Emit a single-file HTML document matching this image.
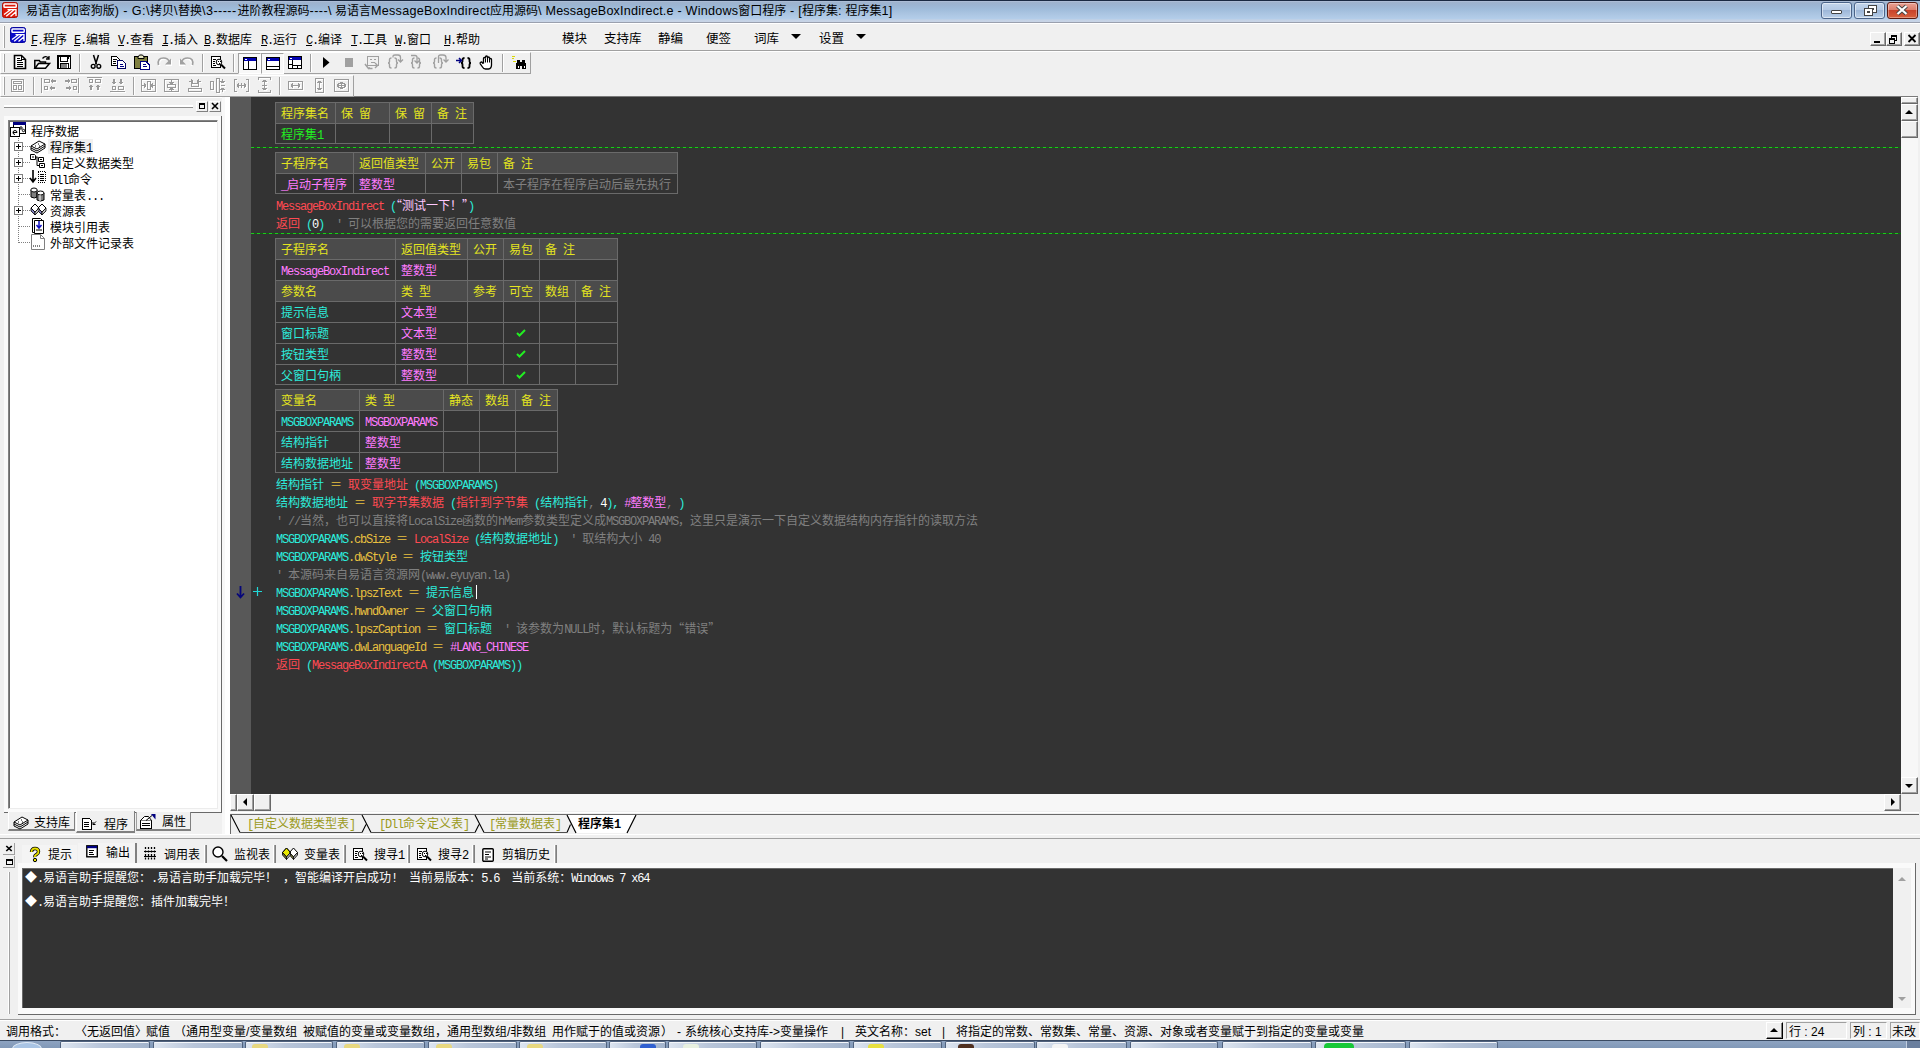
<!DOCTYPE html><html lang="zh-CN"><head><meta charset="utf-8"><title>易语言</title><style>
*{box-sizing:border-box;margin:0;padding:0}
html,body{width:1920px;height:1048px;overflow:hidden;background:#f0f0f0}
body{position:relative;font-family:"Liberation Sans","Noto Sans CJK SC",sans-serif;font-size:12px;color:#000}
.a{position:absolute}
.s{font-family:"Liberation Mono","Noto Sans CJK SC",monospace;font-size:12px;line-height:14px;white-space:pre}
.s i{font-style:normal;letter-spacing:-1.2px}
.s b{font-weight:normal;line-height:0;font-family:"Noto Sans CJK SC",sans-serif}
svg{position:absolute;overflow:visible}
.tb{font-size:12px;line-height:16px;white-space:pre}
.tb i{font-style:normal;font-size:12.6px}
</style></head><body>
<div class="a " style="left:0px;top:0px;width:1920px;height:23px;background:linear-gradient(#1a2a42 0,#1a2a42 1px,#acbdd6 1px,#acbdd6 2px,#9fb3cd 2px,#9cb5d2 5px,#9fbcda 9px,#abc5e2 14px,#b3cde9 18.500px,#c4d2e5 20px,#c8d4e6 22px,#9aa0ae 22px,#9aa0ae 23px)"></div>
<div class="a tb" style="left:26px;top:3px">易语言<i style="letter-spacing:0.45px">(</i>加密狗版<i style="letter-spacing:0.45px">) - G:\</i>拷贝<i style="letter-spacing:0.45px">\</i>替换<i style="letter-spacing:0.45px">\3-----</i></div>
<div class="a tb" style="left:237.5px;top:3px">进阶教程源码<i style="letter-spacing:0.45px">----\</i></div>
<div class="a tb" style="left:335px;top:3px">易语言<i style="letter-spacing:0.27px">MessageBoxIndirect</i></div>
<div class="a tb" style="left:490px;top:3px">应用源码<i style="letter-spacing:0.45px">\</i></div>
<div class="a tb" style="left:545.5px;top:3px"><i style="letter-spacing:0.18px">MessageBoxIndirect.e - </i></div>
<div class="a tb" style="left:685.5px;top:3px"><i style="letter-spacing:0.25px">Windows</i>窗口程序<i style="letter-spacing:0.25px"> - [</i>程序集<i style="letter-spacing:0.25px">: </i>程序集<i style="letter-spacing:0.25px">1]</i></div>
<div class="a " style="left:0px;top:23px;width:1920px;height:27px;background:#f0f0f0;border-top:1px solid #fff"></div>
<div class="a " style="left:0px;top:50px;width:1920px;height:2px;background:#a0a0a0;border-bottom:1px solid #fff"></div>
<div class="a s" style="left:31px;top:34px"><i style="text-decoration:underline">F</i><i>.</i>程序</div>
<div class="a s" style="left:74px;top:34px"><i style="text-decoration:underline">E</i><i>.</i>编辑</div>
<div class="a s" style="left:118px;top:34px"><i style="text-decoration:underline">V</i><i>.</i>查看</div>
<div class="a s" style="left:162px;top:34px"><i style="text-decoration:underline">I</i><i>.</i>插入</div>
<div class="a s" style="left:204px;top:34px"><i style="text-decoration:underline">B</i><i>.</i>数据库</div>
<div class="a s" style="left:261px;top:34px"><i style="text-decoration:underline">R</i><i>.</i>运行</div>
<div class="a s" style="left:306px;top:34px"><i style="text-decoration:underline">C</i><i>.</i>编译</div>
<div class="a s" style="left:351px;top:34px"><i style="text-decoration:underline">T</i><i>.</i>工具</div>
<div class="a s" style="left:395px;top:34px"><i style="text-decoration:underline">W</i><i>.</i>窗口</div>
<div class="a s" style="left:444px;top:34px"><i style="text-decoration:underline">H</i><i>.</i>帮助</div>
<div class="a tt" style="left:562px;top:32px;color:#000;font-size:12.5px;line-height:14px">模块</div>
<div class="a tt" style="left:604px;top:32px;color:#000;font-size:12.5px;line-height:14px">支持库</div>
<div class="a tt" style="left:658px;top:32px;color:#000;font-size:12.5px;line-height:14px">静编</div>
<div class="a tt" style="left:706px;top:32px;color:#000;font-size:12.5px;line-height:14px">便签</div>
<div class="a tt" style="left:754px;top:32px;color:#000;font-size:12.5px;line-height:14px">词库</div>
<div class="a tt" style="left:819px;top:32px;color:#000;font-size:12.5px;line-height:14px">设置</div>
<div class="a" style="left:791px;top:34px;border:5px solid transparent;border-top:5px solid #000;border-bottom:0"></div>
<div class="a" style="left:856px;top:34px;border:5px solid transparent;border-top:5px solid #000;border-bottom:0"></div>
<div class="a " style="left:230px;top:96px;width:1690px;height:716px;background:#333;border-top:1px solid #7a7a7a"></div>
<div class="a " style="left:230px;top:97px;width:21px;height:697px;background:#585858"></div>
<div class="a " style="left:275px;top:102px;width:199px;height:42px;background:#333;border:1px solid #6a6a6a"></div>
<div class="a " style="left:276px;top:103px;width:197px;height:20px;background:#4b4b4b"></div>
<div class="a s" style="left:281px;top:108px;color:#e4e420;">程序集名</div>
<div class="a " style="left:335px;top:102px;width:1px;height:21px;background:#6a6a6a"></div>
<div class="a s" style="left:341px;top:108px;color:#e4e420;">保<i> </i>留</div>
<div class="a " style="left:389px;top:102px;width:1px;height:21px;background:#6a6a6a"></div>
<div class="a s" style="left:395px;top:108px;color:#e4e420;">保<i> </i>留</div>
<div class="a " style="left:431px;top:102px;width:1px;height:21px;background:#6a6a6a"></div>
<div class="a s" style="left:437px;top:108px;color:#e4e420;">备<i> </i>注</div>
<div class="a " style="left:275px;top:123px;width:199px;height:1px;background:#6a6a6a"></div>
<div class="a s" style="left:281px;top:129px;color:#22ee22;">程序集<i>1</i></div>
<div class="a " style="left:335px;top:123px;width:1px;height:20px;background:#6a6a6a"></div>
<div class="a " style="left:389px;top:123px;width:1px;height:20px;background:#6a6a6a"></div>
<div class="a " style="left:431px;top:123px;width:1px;height:20px;background:#6a6a6a"></div>
<div class="a " style="left:275px;top:152px;width:403px;height:42px;background:#333;border:1px solid #6a6a6a"></div>
<div class="a " style="left:276px;top:153px;width:401px;height:20px;background:#4b4b4b"></div>
<div class="a s" style="left:281px;top:158px;color:#e4e420;">子程序名</div>
<div class="a " style="left:353px;top:152px;width:1px;height:21px;background:#6a6a6a"></div>
<div class="a s" style="left:359px;top:158px;color:#e4e420;">返回值类型</div>
<div class="a " style="left:425px;top:152px;width:1px;height:21px;background:#6a6a6a"></div>
<div class="a s" style="left:431px;top:158px;color:#e4e420;">公开</div>
<div class="a " style="left:461px;top:152px;width:1px;height:21px;background:#6a6a6a"></div>
<div class="a s" style="left:467px;top:158px;color:#e4e420;">易包</div>
<div class="a " style="left:497px;top:152px;width:1px;height:21px;background:#6a6a6a"></div>
<div class="a s" style="left:503px;top:158px;color:#e4e420;">备<i> </i>注</div>
<div class="a " style="left:275px;top:173px;width:403px;height:1px;background:#6a6a6a"></div>
<div class="a s" style="left:281px;top:179px;color:#ff7cff;"><i>_</i>启动子程序</div>
<div class="a " style="left:353px;top:173px;width:1px;height:20px;background:#6a6a6a"></div>
<div class="a s" style="left:359px;top:179px;color:#ff7cff;">整数型</div>
<div class="a " style="left:425px;top:173px;width:1px;height:20px;background:#6a6a6a"></div>
<div class="a " style="left:461px;top:173px;width:1px;height:20px;background:#6a6a6a"></div>
<div class="a " style="left:497px;top:173px;width:1px;height:20px;background:#6a6a6a"></div>
<div class="a s" style="left:503px;top:179px;color:#808080;">本子程序在程序启动后最先执行</div>
<div class="a " style="left:275px;top:238px;width:343px;height:147px;background:#333;border:1px solid #6a6a6a"></div>
<div class="a " style="left:276px;top:239px;width:341px;height:20px;background:#4b4b4b"></div>
<div class="a s" style="left:281px;top:244px;color:#e4e420;">子程序名</div>
<div class="a " style="left:395px;top:238px;width:1px;height:21px;background:#6a6a6a"></div>
<div class="a s" style="left:401px;top:244px;color:#e4e420;">返回值类型</div>
<div class="a " style="left:467px;top:238px;width:1px;height:21px;background:#6a6a6a"></div>
<div class="a s" style="left:473px;top:244px;color:#e4e420;">公开</div>
<div class="a " style="left:503px;top:238px;width:1px;height:21px;background:#6a6a6a"></div>
<div class="a s" style="left:509px;top:244px;color:#e4e420;">易包</div>
<div class="a " style="left:539px;top:238px;width:1px;height:21px;background:#6a6a6a"></div>
<div class="a s" style="left:545px;top:244px;color:#e4e420;">备<i> </i>注</div>
<div class="a " style="left:275px;top:259px;width:343px;height:1px;background:#6a6a6a"></div>
<div class="a s" style="left:281px;top:265px;color:#ff7cff;"><i>MessageBoxIndirect</i></div>
<div class="a " style="left:395px;top:259px;width:1px;height:21px;background:#6a6a6a"></div>
<div class="a s" style="left:401px;top:265px;color:#ff7cff;">整数型</div>
<div class="a " style="left:467px;top:259px;width:1px;height:21px;background:#6a6a6a"></div>
<div class="a " style="left:503px;top:259px;width:1px;height:21px;background:#6a6a6a"></div>
<div class="a " style="left:539px;top:259px;width:1px;height:21px;background:#6a6a6a"></div>
<div class="a " style="left:276px;top:281px;width:341px;height:20px;background:#4b4b4b"></div>
<div class="a " style="left:275px;top:280px;width:343px;height:1px;background:#6a6a6a"></div>
<div class="a s" style="left:281px;top:286px;color:#e4e420;">参数名</div>
<div class="a " style="left:395px;top:280px;width:1px;height:21px;background:#6a6a6a"></div>
<div class="a s" style="left:401px;top:286px;color:#e4e420;">类<i> </i>型</div>
<div class="a " style="left:467px;top:280px;width:1px;height:21px;background:#6a6a6a"></div>
<div class="a s" style="left:473px;top:286px;color:#e4e420;">参考</div>
<div class="a " style="left:503px;top:280px;width:1px;height:21px;background:#6a6a6a"></div>
<div class="a s" style="left:509px;top:286px;color:#e4e420;">可空</div>
<div class="a " style="left:539px;top:280px;width:1px;height:21px;background:#6a6a6a"></div>
<div class="a s" style="left:545px;top:286px;color:#e4e420;">数组</div>
<div class="a " style="left:575px;top:280px;width:1px;height:21px;background:#6a6a6a"></div>
<div class="a s" style="left:581px;top:286px;color:#e4e420;">备<i> </i>注</div>
<div class="a " style="left:275px;top:301px;width:343px;height:1px;background:#6a6a6a"></div>
<div class="a s" style="left:281px;top:307px;color:#2cecdc;">提示信息</div>
<div class="a " style="left:395px;top:301px;width:1px;height:21px;background:#6a6a6a"></div>
<div class="a s" style="left:401px;top:307px;color:#ff7cff;">文本型</div>
<div class="a " style="left:467px;top:301px;width:1px;height:21px;background:#6a6a6a"></div>
<div class="a " style="left:503px;top:301px;width:1px;height:21px;background:#6a6a6a"></div>
<div class="a " style="left:539px;top:301px;width:1px;height:21px;background:#6a6a6a"></div>
<div class="a " style="left:575px;top:301px;width:1px;height:21px;background:#6a6a6a"></div>
<div class="a " style="left:275px;top:322px;width:343px;height:1px;background:#6a6a6a"></div>
<div class="a s" style="left:281px;top:328px;color:#2cecdc;">窗口标题</div>
<div class="a " style="left:395px;top:322px;width:1px;height:21px;background:#6a6a6a"></div>
<div class="a s" style="left:401px;top:328px;color:#ff7cff;">文本型</div>
<div class="a " style="left:467px;top:322px;width:1px;height:21px;background:#6a6a6a"></div>
<div class="a " style="left:503px;top:322px;width:1px;height:21px;background:#6a6a6a"></div>
<svg style="left:516px;top:329px" width="10" height="8" viewBox="0 0 10 8"><path d="M1 4 L3.5 6.5 L9 1" fill="none" stroke="#2e2" stroke-width="2"/></svg>
<div class="a " style="left:539px;top:322px;width:1px;height:21px;background:#6a6a6a"></div>
<div class="a " style="left:575px;top:322px;width:1px;height:21px;background:#6a6a6a"></div>
<div class="a " style="left:275px;top:343px;width:343px;height:1px;background:#6a6a6a"></div>
<div class="a s" style="left:281px;top:349px;color:#2cecdc;">按钮类型</div>
<div class="a " style="left:395px;top:343px;width:1px;height:21px;background:#6a6a6a"></div>
<div class="a s" style="left:401px;top:349px;color:#ff7cff;">整数型</div>
<div class="a " style="left:467px;top:343px;width:1px;height:21px;background:#6a6a6a"></div>
<div class="a " style="left:503px;top:343px;width:1px;height:21px;background:#6a6a6a"></div>
<svg style="left:516px;top:350px" width="10" height="8" viewBox="0 0 10 8"><path d="M1 4 L3.5 6.5 L9 1" fill="none" stroke="#2e2" stroke-width="2"/></svg>
<div class="a " style="left:539px;top:343px;width:1px;height:21px;background:#6a6a6a"></div>
<div class="a " style="left:575px;top:343px;width:1px;height:21px;background:#6a6a6a"></div>
<div class="a " style="left:275px;top:364px;width:343px;height:1px;background:#6a6a6a"></div>
<div class="a s" style="left:281px;top:370px;color:#2cecdc;">父窗口句柄</div>
<div class="a " style="left:395px;top:364px;width:1px;height:20px;background:#6a6a6a"></div>
<div class="a s" style="left:401px;top:370px;color:#ff7cff;">整数型</div>
<div class="a " style="left:467px;top:364px;width:1px;height:20px;background:#6a6a6a"></div>
<div class="a " style="left:503px;top:364px;width:1px;height:20px;background:#6a6a6a"></div>
<svg style="left:516px;top:371px" width="10" height="8" viewBox="0 0 10 8"><path d="M1 4 L3.5 6.5 L9 1" fill="none" stroke="#2e2" stroke-width="2"/></svg>
<div class="a " style="left:539px;top:364px;width:1px;height:20px;background:#6a6a6a"></div>
<div class="a " style="left:575px;top:364px;width:1px;height:20px;background:#6a6a6a"></div>
<div class="a " style="left:275px;top:389px;width:283px;height:84px;background:#333;border:1px solid #6a6a6a"></div>
<div class="a " style="left:276px;top:390px;width:281px;height:20px;background:#4b4b4b"></div>
<div class="a s" style="left:281px;top:395px;color:#e4e420;">变量名</div>
<div class="a " style="left:359px;top:389px;width:1px;height:21px;background:#6a6a6a"></div>
<div class="a s" style="left:365px;top:395px;color:#e4e420;">类<i> </i>型</div>
<div class="a " style="left:443px;top:389px;width:1px;height:21px;background:#6a6a6a"></div>
<div class="a s" style="left:449px;top:395px;color:#e4e420;">静态</div>
<div class="a " style="left:479px;top:389px;width:1px;height:21px;background:#6a6a6a"></div>
<div class="a s" style="left:485px;top:395px;color:#e4e420;">数组</div>
<div class="a " style="left:515px;top:389px;width:1px;height:21px;background:#6a6a6a"></div>
<div class="a s" style="left:521px;top:395px;color:#e4e420;">备<i> </i>注</div>
<div class="a " style="left:275px;top:410px;width:283px;height:1px;background:#6a6a6a"></div>
<div class="a s" style="left:281px;top:416px;color:#2cecdc;"><i>MSGBOXPARAMS</i></div>
<div class="a " style="left:359px;top:410px;width:1px;height:21px;background:#6a6a6a"></div>
<div class="a s" style="left:365px;top:416px;color:#ff7cff;"><i>MSGBOXPARAMS</i></div>
<div class="a " style="left:443px;top:410px;width:1px;height:21px;background:#6a6a6a"></div>
<div class="a " style="left:479px;top:410px;width:1px;height:21px;background:#6a6a6a"></div>
<div class="a " style="left:515px;top:410px;width:1px;height:21px;background:#6a6a6a"></div>
<div class="a " style="left:275px;top:431px;width:283px;height:1px;background:#6a6a6a"></div>
<div class="a s" style="left:281px;top:437px;color:#2cecdc;">结构指针</div>
<div class="a " style="left:359px;top:431px;width:1px;height:21px;background:#6a6a6a"></div>
<div class="a s" style="left:365px;top:437px;color:#ff7cff;">整数型</div>
<div class="a " style="left:443px;top:431px;width:1px;height:21px;background:#6a6a6a"></div>
<div class="a " style="left:479px;top:431px;width:1px;height:21px;background:#6a6a6a"></div>
<div class="a " style="left:515px;top:431px;width:1px;height:21px;background:#6a6a6a"></div>
<div class="a " style="left:275px;top:452px;width:283px;height:1px;background:#6a6a6a"></div>
<div class="a s" style="left:281px;top:458px;color:#2cecdc;">结构数据地址</div>
<div class="a " style="left:359px;top:452px;width:1px;height:20px;background:#6a6a6a"></div>
<div class="a s" style="left:365px;top:458px;color:#ff7cff;">整数型</div>
<div class="a " style="left:443px;top:452px;width:1px;height:20px;background:#6a6a6a"></div>
<div class="a " style="left:479px;top:452px;width:1px;height:20px;background:#6a6a6a"></div>
<div class="a " style="left:515px;top:452px;width:1px;height:20px;background:#6a6a6a"></div>
<div class="a " style="left:251px;top:147px;width:1650px;height:1px;background:repeating-linear-gradient(90deg,#1ec81e 0,#1ec81e 3px,#0a6a0a 3px,#0a6a0a 6px)"></div>
<div class="a " style="left:251px;top:233px;width:1650px;height:1px;background:repeating-linear-gradient(90deg,#1ec81e 0,#1ec81e 3px,#0a6a0a 3px,#0a6a0a 6px)"></div>
<div class="a s" style="left:276px;top:200px"><span style="color:#ff4a52"><i>MessageBoxIndirect</i></span><span style="color:#2cecdc"><i> (</i></span><span style="color:#ffc8ff"><b>“</b>测试一下！<b>”</b></span><span style="color:#2cecdc"><i>)</i></span></div>
<div class="a s" style="left:276px;top:218px"><span style="color:#ff4a52">返回</span><span style="color:#2cecdc"><i> (</i></span><span style="color:#fff"><i>0</i></span><span style="color:#2cecdc"><i>)</i></span><span style="color:#808080"><i>  ' </i>可以根据您的需要返回任意数值</span></div>
<div class="a s" style="left:276px;top:479px"><span style="color:#2cecdc">结构指针</span><span style="color:#e8c040"><i> </i>＝<i> </i></span><span style="color:#ff4a52">取变量地址</span><span style="color:#2cecdc"><i> (</i></span><span style="color:#2cecdc"><i>MSGBOXPARAMS</i></span><span style="color:#2cecdc"><i>)</i></span></div>
<div class="a s" style="left:276px;top:497px"><span style="color:#2cecdc">结构数据地址</span><span style="color:#e8c040"><i> </i>＝<i> </i></span><span style="color:#ff4a52">取字节集数据</span><span style="color:#2cecdc"><i> (</i></span><span style="color:#ff4a52">指针到字节集</span><span style="color:#2cecdc"><i> (</i></span><span style="color:#2cecdc">结构指针</span><span style="color:#808080"><i>, </i></span><span style="color:#fff"><i>4</i></span><span style="color:#2cecdc"><i>), </i></span><span style="color:#ff7cff"><i>#</i>整数型</span><span style="color:#808080"><i>, </i></span><span style="color:#2cecdc"><i>)</i></span></div>
<div class="a s" style="left:276px;top:515px"><span style="color:#808080"><i>' //</i>当然，也可以直接将<i>LocalSize</i>函数的<i>hMem</i>参数类型定义成<i>MSGBOXPARAMS</i>，这里只是演示一下自定义数据结构内存指针的读取方法</span></div>
<div class="a s" style="left:276px;top:533px"><span style="color:#2cecdc"><i>MSGBOXPARAMS</i></span><span style="color:#e8c040"><i>.cbSize</i></span><span style="color:#e8c040"><i> </i>＝<i> </i></span><span style="color:#ff4a52"><i>LocalSize</i></span><span style="color:#2cecdc"><i> (</i></span><span style="color:#2cecdc">结构数据地址</span><span style="color:#2cecdc"><i>)</i></span><span style="color:#808080"><i>  ' </i>取结构大小<i> 40</i></span></div>
<div class="a s" style="left:276px;top:551px"><span style="color:#2cecdc"><i>MSGBOXPARAMS</i></span><span style="color:#e8c040"><i>.dwStyle</i></span><span style="color:#e8c040"><i> </i>＝<i> </i></span><span style="color:#2cecdc">按钮类型</span></div>
<div class="a s" style="left:276px;top:569px"><span style="color:#808080"><i>' </i>本源码来自易语言资源网<i>(www.eyuyan.la)</i></span></div>
<div class="a s" style="left:276px;top:587px"><span style="color:#2cecdc"><i>MSGBOXPARAMS</i></span><span style="color:#e8c040"><i>.lpszText</i></span><span style="color:#e8c040"><i> </i>＝<i> </i></span><span style="color:#2cecdc">提示信息</span></div>
<div class="a s" style="left:276px;top:605px"><span style="color:#2cecdc"><i>MSGBOXPARAMS</i></span><span style="color:#e8c040"><i>.hwndOwner</i></span><span style="color:#e8c040"><i> </i>＝<i> </i></span><span style="color:#2cecdc">父窗口句柄</span></div>
<div class="a s" style="left:276px;top:623px"><span style="color:#2cecdc"><i>MSGBOXPARAMS</i></span><span style="color:#e8c040"><i>.lpszCaption</i></span><span style="color:#e8c040"><i> </i>＝<i> </i></span><span style="color:#2cecdc">窗口标题</span><span style="color:#808080"><i>  ' </i>该参数为<i>NULL</i>时，默认标题为<b>“</b>错误<b>”</b></span></div>
<div class="a s" style="left:276px;top:641px"><span style="color:#2cecdc"><i>MSGBOXPARAMS</i></span><span style="color:#e8c040"><i>.dwLanguageId</i></span><span style="color:#e8c040"><i> </i>＝<i> </i></span><span style="color:#ff7cff"><i>#LANG_CHINESE</i></span></div>
<div class="a s" style="left:276px;top:659px"><span style="color:#ff4a52">返回</span><span style="color:#2cecdc"><i> (</i></span><span style="color:#ff4a52"><i>MessageBoxIndirectA</i></span><span style="color:#2cecdc"><i> (</i></span><span style="color:#2cecdc"><i>MSGBOXPARAMS</i></span><span style="color:#2cecdc"><i>))</i></span></div>
<div class="a " style="left:476px;top:585px;width:1px;height:14px;background:#fff"></div>
<svg style="left:236px;top:586px" width="9" height="13" viewBox="0 0 9 13"><path d="M4.5 0v11M1 7.5l3.5 4 3.5-4" fill="none" stroke="#06067a" stroke-width="1.800"/></svg>
<svg style="left:253px;top:587px" width="9" height="9" viewBox="0 0 9 9"><path d="M4.5 0v9M0 4.5h9" fill="none" stroke="#20d8d8" stroke-width="1.2"/></svg>
<div class="a " style="left:1901px;top:97px;width:17px;height:697px;background:#f7f7f7"></div>
<div class="a " style="left:1901px;top:97px;width:17px;height:7px;background:#f0f0f0;border:1px solid;border-color:#fff #696969 #696969 #fff;box-shadow:inset -1px -1px 0 #a0a0a0"></div>
<div class="a " style="left:1901px;top:104px;width:17px;height:17px;background:#f0f0f0;border:1px solid;border-color:#fff #696969 #696969 #fff;box-shadow:inset -1px -1px 0 #a0a0a0"></div>
<svg style="left:1905px;top:110px" width="8" height="4"><polygon points="0,4 8,4 4,0" fill="#000"/></svg>
<div class="a " style="left:1901px;top:121px;width:17px;height:17px;background:#f0f0f0;border:1px solid;border-color:#fff #696969 #696969 #fff;box-shadow:inset -1px -1px 0 #a0a0a0"></div>
<div class="a " style="left:1901px;top:777px;width:17px;height:17px;background:#f0f0f0;border:1px solid;border-color:#fff #696969 #696969 #fff;box-shadow:inset -1px -1px 0 #a0a0a0"></div>
<svg style="left:1905px;top:784px" width="8" height="4"><polygon points="0,0 8,0 4,4" fill="#000"/></svg>
<div class="a " style="left:230px;top:794px;width:1671px;height:17px;background:#f7f7f7"></div>
<div class="a " style="left:230px;top:794px;width:7px;height:17px;background:#f0f0f0;border:1px solid;border-color:#fff #696969 #696969 #fff;box-shadow:inset -1px -1px 0 #a0a0a0"></div>
<div class="a " style="left:237px;top:794px;width:17px;height:17px;background:#f0f0f0;border:1px solid;border-color:#fff #696969 #696969 #fff;box-shadow:inset -1px -1px 0 #a0a0a0"></div>
<svg style="left:243px;top:798px" width="4" height="8"><polygon points="4,0 4,8 0,4" fill="#000"/></svg>
<div class="a " style="left:254px;top:794px;width:17px;height:17px;background:#f0f0f0;border:1px solid;border-color:#fff #696969 #696969 #fff;box-shadow:inset -1px -1px 0 #a0a0a0"></div>
<div class="a " style="left:1884px;top:794px;width:17px;height:17px;background:#f0f0f0;border:1px solid;border-color:#fff #696969 #696969 #fff;box-shadow:inset -1px -1px 0 #a0a0a0"></div>
<svg style="left:1891px;top:798px" width="4" height="8"><polygon points="0,0 0,8 4,4" fill="#000"/></svg>
<div class="a " style="left:1901px;top:794px;width:19px;height:17px;background:#f0f0f0"></div>
<div class="a " style="left:1918px;top:96px;width:2px;height:716px;background:#f0f0f0"></div>
<div class="a " style="left:229px;top:811px;width:1691px;height:24px;background:#f0f0f0"></div>
<div class="a " style="left:230px;top:814px;width:1689px;height:1px;background:#696969"></div>
<div class="a " style="left:229px;top:812px;width:1690px;height:1px;background:#fff"></div>
<div class="a " style="left:230px;top:814px;width:1px;height:20px;background:#696969"></div>
<svg style="left:229px;top:814px" width="420" height="20" viewBox="0 0 420 20"><path d="M398 19h-51l-9-18h69z" fill="#fff"/><path d="M2 1l9 17.500M133 18.500l4-8M133 1l9 17.500M246 18.500l4-8M246 1l9 17.500M338 18.500l3.500-8" fill="none" stroke="#000" stroke-width="1.100"/><path d="M11 18.500h122M142 18.500h104M255 18.500h83" fill="none" stroke="#505050" stroke-width="1"/><path d="M338 1l9 18M398 19l9-18" fill="none" stroke="#000" stroke-width="1.200"/></svg>
<div class="a s" style="left:247px;top:818px;color:#9a9a1c;"><i>[</i>自定义数据类型表<i>]</i></div>
<div class="a s" style="left:379px;top:818px;color:#9a9a1c;"><i>[Dll</i>命令定义表<i>]</i></div>
<div class="a s" style="left:489px;top:818px;color:#9a9a1c;"><i>[</i>常量数据表<i>]</i></div>
<div class="a s" style="left:578px;top:818px;color:#000;font-weight:bold">程序集<i>1</i></div>
<div class="a " style="left:0px;top:834px;width:1920px;height:1px;background:#fff"></div>
<div class="a " style="left:0px;top:838px;width:1920px;height:1px;background:#a0a0a0"></div>
<div class="a " style="left:0px;top:97px;width:229px;height:737px;background:#f0f0f0;border-top:1px solid #fff"></div>
<div class="a " style="left:222px;top:97px;width:8px;height:737px;background:linear-gradient(90deg,#f8f8f8 0,#f8f8f8 3px,#fff 3px)"></div>
<div class="a " style="left:4px;top:105px;width:189px;height:3px;border-top:2px solid #fff;border-bottom:1px solid #909090"></div>
<div class="a " style="left:196px;top:101px;width:12px;height:11px;background:#f0f0f0;border:1px solid;border-color:#fff #808080 #808080 #fff"></div>
<div class="a " style="left:199px;top:103px;width:6px;height:6px;border:1px solid #000;border-top-width:2px"></div>
<div class="a " style="left:209px;top:101px;width:12px;height:11px;background:#f0f0f0;border:1px solid;border-color:#fff #808080 #808080 #fff"></div>
<svg style="left:212px;top:103px" width="6" height="6"><path d="M0 0l6 6M6 0L0 6" stroke="#000" stroke-width="1.6"/></svg>
<div class="a " style="left:4px;top:116px;width:218px;height:697px;background:#fafafa;border-right:1px solid #696969;border-bottom:1px solid #696969"></div>
<div class="a " style="left:8px;top:120px;width:210px;height:689px;background:#fff;border:1px solid;border-color:#828282 #ececec #ececec #828282;box-shadow:inset 1px 1px 0 #696969"></div>
<div class="a " style="left:18px;top:138px;width:1px;height:105px;background:repeating-linear-gradient(#808080 0,#808080 1px,transparent 1px,transparent 2px)"></div>
<div class="a s" style="left:31px;top:126px;color:#000;">程序数据</div>
<div class="a " style="left:48px;top:139px;width:45px;height:15px;background:#f0f0f0"></div>
<div class="a " style="left:19px;top:146px;width:11px;height:1px;background:repeating-linear-gradient(90deg,#808080 0,#808080 1px,transparent 1px,transparent 2px)"></div>
<div class="a " style="left:14px;top:142px;width:9px;height:9px;background:#fff;border:1px solid #808080"></div>
<div class="a " style="left:16px;top:146px;width:5px;height:1px;background:#000"></div>
<div class="a " style="left:18px;top:144px;width:1px;height:5px;background:#000"></div>
<div class="a s" style="left:50px;top:142px;color:#000;">程序集<i>1</i></div>
<div class="a " style="left:19px;top:162px;width:11px;height:1px;background:repeating-linear-gradient(90deg,#808080 0,#808080 1px,transparent 1px,transparent 2px)"></div>
<div class="a " style="left:14px;top:158px;width:9px;height:9px;background:#fff;border:1px solid #808080"></div>
<div class="a " style="left:16px;top:162px;width:5px;height:1px;background:#000"></div>
<div class="a " style="left:18px;top:160px;width:1px;height:5px;background:#000"></div>
<div class="a s" style="left:50px;top:158px;color:#000;">自定义数据类型</div>
<div class="a " style="left:19px;top:178px;width:11px;height:1px;background:repeating-linear-gradient(90deg,#808080 0,#808080 1px,transparent 1px,transparent 2px)"></div>
<div class="a " style="left:14px;top:174px;width:9px;height:9px;background:#fff;border:1px solid #808080"></div>
<div class="a " style="left:16px;top:178px;width:5px;height:1px;background:#000"></div>
<div class="a " style="left:18px;top:176px;width:1px;height:5px;background:#000"></div>
<div class="a s" style="left:50px;top:174px;color:#000;"><i>Dll</i>命令</div>
<div class="a " style="left:19px;top:194px;width:11px;height:1px;background:repeating-linear-gradient(90deg,#808080 0,#808080 1px,transparent 1px,transparent 2px)"></div>
<div class="a s" style="left:50px;top:190px;color:#000;">常量表<i>...</i></div>
<div class="a " style="left:19px;top:210px;width:11px;height:1px;background:repeating-linear-gradient(90deg,#808080 0,#808080 1px,transparent 1px,transparent 2px)"></div>
<div class="a " style="left:14px;top:206px;width:9px;height:9px;background:#fff;border:1px solid #808080"></div>
<div class="a " style="left:16px;top:210px;width:5px;height:1px;background:#000"></div>
<div class="a " style="left:18px;top:208px;width:1px;height:5px;background:#000"></div>
<div class="a s" style="left:50px;top:206px;color:#000;">资源表</div>
<div class="a " style="left:19px;top:226px;width:11px;height:1px;background:repeating-linear-gradient(90deg,#808080 0,#808080 1px,transparent 1px,transparent 2px)"></div>
<div class="a s" style="left:50px;top:222px;color:#000;">模块引用表</div>
<div class="a " style="left:19px;top:242px;width:11px;height:1px;background:repeating-linear-gradient(90deg,#808080 0,#808080 1px,transparent 1px,transparent 2px)"></div>
<div class="a s" style="left:50px;top:238px;color:#000;">外部文件记录表</div>
<svg style="left:10px;top:122px" width="16" height="16" viewBox="0 0 16 16"><rect x="3.5" y=".5" width="12" height="11" fill="#fff" stroke="#000"/><rect x="3" y="0" width="13" height="3" fill="#000080"/><rect x=".5" y="5.5" width="9" height="9" fill="#fff" stroke="#000"/><path d="M3 10.5h4a2 2 0 1 0-2 2" fill="none" stroke="#000" stroke-width="1"/><circle cx="11" cy="6" r="1.2" fill="none" stroke="#000" stroke-width="1"/><circle cx="13.5" cy="8.5" r="1.2" fill="none" stroke="#000" stroke-width="1"/></svg>
<svg style="left:30px;top:138px" width="16" height="16" viewBox="0 0 16 16"><path d="M1 8l8-5 6 3-8 5zM1 10l6 3 8-5M1 12l6 3 8-5M1 8v4M15 6v4" fill="#fff" stroke="#000" stroke-width="1"/><path d="M5 8h1M8 6h1M9 8h1" stroke="#000"/></svg>
<svg style="left:30px;top:154px" width="16" height="16" viewBox="0 0 16 16"><path d="M.5 .5h4l1 1v4h-5zM8.500 3.5h5v4h-5zM9.500 9.500h5v4h-5zM5.5 3h2M7 3v8.5h2.500" fill="none" stroke="#000" stroke-width="1"/><path d="M2 3h2M10 5.5h2M11 11.5h2" stroke="#000"/></svg>
<svg style="left:30px;top:170px" width="16" height="16" viewBox="0 0 16 16"><path d="M3 0v11M0 8l3 4 3-4" fill="none" stroke="#000" stroke-width="1.6"/><path d="M8 1.500h8M8 12.500h8M8.500 2v10M15.500 2v10" fill="none" stroke="#000" stroke-dasharray="1 1"/><path d="M10 4.500h4M10 6.500h4M10 8.500h4M10 10.500h4" stroke="#000"/></svg>
<svg style="left:30px;top:186px" width="16" height="16" viewBox="0 0 16 16"><path d="M1 4v7q3.500 2 6 0V4" fill="#808080" stroke="#000"/><ellipse cx="4" cy="4" rx="3.2" ry="2" fill="#fff" stroke="#000"/><path d="M7 7v7q3.500 2 7 0V7" fill="#808080" stroke="#000"/><ellipse cx="10.500" cy="7" rx="3.500" ry="2" fill="#fff" stroke="#000"/><path d="M10 9v6" stroke="#fff"/></svg>
<svg style="left:30px;top:202px" width="16" height="16" viewBox="0 0 16 16"><path d="M1 6l4-4 4 4-4 4zM8 6l4-4 4 4-4 4z" fill="#fff" stroke="#000"/><path d="M1 6v3l4 4v-3zM8 6v3l4 4v-3z" fill="#8080c0" stroke="#000" stroke-width=".8"/><path d="M9 6l-4 4v3l4-4zM16 6l-4 4v3l4-4z" fill="#c0c0c0" stroke="#000" stroke-width=".8"/></svg>
<svg style="left:30px;top:218px" width="16" height="16" viewBox="0 0 16 16"><path d="M2.500 .5h8l3 3v11h-11z" fill="#fff" stroke="#000"/><path d="M4.500 2.500h9v13h-9z" fill="#fff" stroke="#000"/><path d="M9 3v6M6.500 7l2.500 3 2.500-3" fill="none" stroke="#1010c0" stroke-width="1.5"/><path d="M6 12h6" stroke="#000"/></svg>
<svg style="left:30px;top:234px" width="16" height="16" viewBox="0 0 16 16"><path d="M1.500 .5h9l4 4v11h-13z" fill="#fff" stroke="#808080"/><path d="M10.500 .5v4h4" fill="none" stroke="#808080"/><path d="M3 12h8" stroke="#000" stroke-dasharray="1 1"/></svg>
<div class="a " style="left:8px;top:812px;width:67px;height:19px;background:#f0f0f0;border-bottom:2px solid #808080;border-right:1px solid #808080;border-left:1px solid #fff"></div>
<div class="a " style="left:136px;top:812px;width:55px;height:19px;background:#f0f0f0;border-bottom:2px solid #808080;border-right:1px solid #808080;border-left:1px solid #a0a0a0"></div>
<div class="a " style="left:76px;top:811px;width:59px;height:22px;background:#f0f0f0;border-bottom:2px solid #808080;border-right:1px solid #808080;border-left:1px solid #fff"></div>
<svg style="left:13px;top:814px" width="16" height="16" viewBox="0 0 16 16"><path d="M1 8l8-5 6 3-8 5zM1 10l6 3 8-5M1 12l6 3 8-5M1 8v4M15 6v4" fill="#fff" stroke="#000" stroke-width="1"/><path d="M5 8h1M8 6h1M9 8h1" stroke="#000"/></svg>
<div class="a s" style="left:34px;top:817px;color:#000;">支持库</div>
<svg style="left:82px;top:817px" width="16" height="16" viewBox="0 0 16 16" shape-rendering="crispEdges"><path d="M.5 1.500h7l2 2v9h-9z" fill="#fff" stroke="#000" stroke-width="1.3" /><path d="M2 5.500h5M2 7.500h5M2 9.500h5" fill="none" stroke="#000" stroke-width="1" /><path d="M14 4.500l-3 3M11 5v2.500h2.500" fill="none" stroke="#000" stroke-width="1" shape-rendering="geometricPrecision"/></svg>
<div class="a s" style="left:104px;top:819px;color:#000;">程序</div>
<svg style="left:140px;top:814px" width="16" height="16" viewBox="0 0 16 16" shape-rendering="crispEdges"><path d="M.5 6.500h11v8h-11z" fill="#fff" stroke="#000" stroke-width="1.3" /><path d="M.5 6.500l4-4h4l3 4" fill="#fff" stroke="#000" stroke-width="1" shape-rendering="geometricPrecision"/><path d="M2 9.500h8M2 11.500h8" fill="none" stroke="#000" stroke-width="1" /><path d="M6 6.500l6-5" fill="none" stroke="#000" stroke-width="1" shape-rendering="geometricPrecision"/><path d="M11 0h4.500v5.500z" fill="#000080" shape-rendering="geometricPrecision"/></svg>
<div class="a s" style="left:162px;top:816px;color:#000;">属性</div>
<div class="a " style="left:0px;top:52px;width:531px;height:22px;background:#f0f0f0;border:1px solid;border-color:#fff #a0a0a0 #a0a0a0 #fff"></div>
<div class="a " style="left:0px;top:75px;width:354px;height:22px;background:#f0f0f0;border:1px solid;border-color:#fff #a0a0a0 #a0a0a0 #fff"></div>
<div class="a " style="left:3px;top:54px;width:2px;height:18px;border-left:1px solid #fff;border-right:1px solid #a0a0a0"></div>
<div class="a " style="left:3px;top:77px;width:2px;height:18px;border-left:1px solid #fff;border-right:1px solid #a0a0a0"></div>
<div class="a " style="left:3px;top:26px;width:2px;height:22px;border-left:1px solid #fff;border-right:1px solid #a0a0a0"></div>
<div class="a " style="left:79px;top:54px;width:2px;height:18px;border-left:1px solid #a0a0a0;border-right:1px solid #fff"></div>
<div class="a " style="left:202px;top:54px;width:2px;height:18px;border-left:1px solid #a0a0a0;border-right:1px solid #fff"></div>
<div class="a " style="left:233px;top:54px;width:2px;height:18px;border-left:1px solid #a0a0a0;border-right:1px solid #fff"></div>
<div class="a " style="left:310px;top:54px;width:2px;height:18px;border-left:1px solid #a0a0a0;border-right:1px solid #fff"></div>
<div class="a " style="left:502px;top:54px;width:2px;height:18px;border-left:1px solid #a0a0a0;border-right:1px solid #fff"></div>
<div class="a " style="left:33px;top:77px;width:2px;height:18px;border-left:1px solid #a0a0a0;border-right:1px solid #fff"></div>
<div class="a " style="left:133px;top:77px;width:2px;height:18px;border-left:1px solid #a0a0a0;border-right:1px solid #fff"></div>
<div class="a " style="left:279px;top:77px;width:2px;height:18px;border-left:1px solid #a0a0a0;border-right:1px solid #fff"></div>
<div class="a " style="left:238px;top:53px;width:23px;height:21px;border:1px solid;border-color:#a0a0a0 #fff #fff #a0a0a0;background:#f8f8f8"></div>
<div class="a " style="left:261px;top:53px;width:23px;height:21px;border:1px solid;border-color:#a0a0a0 #fff #fff #a0a0a0;background:#f8f8f8"></div>
<svg style="left:12px;top:54px" width="16" height="16" viewBox="0 0 16 16" shape-rendering="crispEdges"><path d="M2.5 1.5h7l4 4v9h-11z" fill="#fff" stroke="#000" stroke-width="1.6" shape-rendering="geometricPrecision"/><path d="M9.5 1.5v4h4" fill="none" stroke="#000" stroke-width="1" /><path d="M5 4.5h3M5 6.5h5M5 8.5h6M5 10.5h6M5 12.5h6" fill="none" stroke="#000" stroke-width="1" /></svg>
<svg style="left:34px;top:54px" width="16" height="16" viewBox="0 0 16 16" shape-rendering="crispEdges"><path d="M.8 14.2V6.5h4.5l1 1.5h5.200v2" fill="none" stroke="#000" stroke-width="1.5" shape-rendering="geometricPrecision"/><path d="M1 14.2l3.5-4.700h11l-4 4.700z" fill="#fff" stroke="#000" stroke-width="1.5" shape-rendering="geometricPrecision"/><path d="M8.5 4.5q3-3.500 6-.5M15 2v3h-3" fill="none" stroke="#000" stroke-width="1.3" shape-rendering="geometricPrecision"/></svg>
<svg style="left:56px;top:54px" width="16" height="16" viewBox="0 0 16 16" shape-rendering="crispEdges"><path d="M1.700 1.700h12.600v12.600h-12.600z" fill="#fff" stroke="#000" stroke-width="1.6" /><path d="M4.500 2v5h7v-5" fill="none" stroke="#000" stroke-width="1" /><rect x="5" y="10" width="6" height="4" fill="#808080"/><path d="M4.500 14v-4.500h7.500v4.500M12.500 2.500v2" fill="none" stroke="#000" stroke-width="1" /></svg>
<svg style="left:88px;top:54px" width="16" height="16" viewBox="0 0 16 16" shape-rendering="crispEdges"><path d="M5.5 1l3 9.500M10.500 1l-3 9.500" fill="none" stroke="#000" stroke-width="1.5" shape-rendering="geometricPrecision"/><circle cx="5.200" cy="12.300" r="1.900" fill="none" stroke="#000" stroke-width="1.400" shape-rendering="geometricPrecision"/><circle cx="10.800" cy="12.300" r="1.900" fill="none" stroke="#000" stroke-width="1.400" shape-rendering="geometricPrecision"/></svg>
<svg style="left:110px;top:54px" width="16" height="16" viewBox="0 0 16 16" shape-rendering="crispEdges"><path d="M1.500 2.500h5l3 3v6h-8z" fill="#fff" stroke="#000" stroke-width="1" /><path d="M1 2.500v9.500M1 11.700h8" fill="none" stroke="#000" stroke-width="1" /><path d="M7.500 6.500h5l3 3v5h-8z" fill="#fff" stroke="#000060" stroke-width="1" /><path d="M7 6.500v8.500M7 14.700h8.500" fill="none" stroke="#000060" stroke-width="1" /><path d="M3 5.500h4M3 7.500h3M3 9.500h3" fill="none" stroke="#000" stroke-width="1" /><path d="M10 10.500h3M10 12.500h4" fill="none" stroke="#000080" stroke-width="1" /></svg>
<svg style="left:134px;top:54px" width="16" height="16" viewBox="0 0 16 16" shape-rendering="crispEdges"><rect x=".5" y="2.500" width="13" height="12" fill="#808040" stroke="#000" stroke-width="1"/><path d="M4 4.500h6v-1.500l-1.500-2h-3l-1.500 2z" fill="#e8e8c0" stroke="#000" stroke-width="1" shape-rendering="geometricPrecision"/><path d="M6.500 7.500h5.500l3 3v5h-8.500z" fill="#fff" stroke="#000080" stroke-width="1" /><path d="M6 15.700h9" fill="none" stroke="#000080" stroke-width="1" /><path d="M9 10.500h3M9 12.500h4" fill="none" stroke="#000080" stroke-width="1" /></svg>
<svg style="left:156px;top:54px" width="16" height="16" viewBox="0 0 16 16" shape-rendering="crispEdges"><path d="M2.500 11q-1.500-7 5-7q4.500 0 5.500 3.500" fill="none" stroke="#fff" stroke-width="1.7" shape-rendering="geometricPrecision" transform="translate(1,1)"/><path d="M9 10.500h6v-6z" fill="#fff" transform="translate(1,1)"/><path d="M2.500 11q-1.500-7 5-7q4.500 0 5.500 3.500" fill="none" stroke="#a0a0a0" stroke-width="1.7" shape-rendering="geometricPrecision"/><path d="M9 10.500h6v-6z" fill="#a0a0a0" shape-rendering="geometricPrecision"/></svg>
<svg style="left:179px;top:54px" width="16" height="16" viewBox="0 0 16 16" shape-rendering="crispEdges"><g transform="translate(16,0) scale(-1,1)"><path d="M2.500 11q-1.500-7 5-7q4.500 0 5.500 3.500" fill="none" stroke="#fff" stroke-width="1.7" shape-rendering="geometricPrecision" transform="translate(1,1)"/><path d="M9 10.500h6v-6z" fill="#fff" transform="translate(1,1)"/><path d="M2.500 11q-1.500-7 5-7q4.500 0 5.500 3.500" fill="none" stroke="#a0a0a0" stroke-width="1.7" shape-rendering="geometricPrecision"/><path d="M9 10.500h6v-6z" fill="#a0a0a0" shape-rendering="geometricPrecision"/></g></svg>
<svg style="left:210px;top:54px" width="16" height="16" viewBox="0 0 16 16" shape-rendering="crispEdges"><path d="M1.500 2.500h9v11h-9z" fill="#fff" stroke="#000" stroke-width="1" /><path d="M1 2.500v11.500" fill="none" stroke="#000" stroke-width="1" /><path d="M1 13.800h10M1 2.200h10" fill="none" stroke="#000" stroke-width="1" /><path d="M3 5.500h3M3 7.500h2M3 9.500h2M3 11.500h3" fill="none" stroke="#000" stroke-width="1" /><circle cx="9" cy="8" r="2.800" fill="#fff" stroke="#000" shape-rendering="geometricPrecision"/><path d="M8 7.500h.8M10 7.500h.8M8.500 9.300h1.500" fill="none" stroke="#000" stroke-width="1" /><path d="M11 10.500l4 4" fill="none" stroke="#000" stroke-width="2" shape-rendering="geometricPrecision"/></svg>
<svg style="left:242px;top:54px" width="16" height="16" viewBox="0 0 16 16" shape-rendering="crispEdges"><g transform="translate(0,0)"><rect x="1.500" y="3.500" width="13" height="12" fill="#fff" stroke="#000"/><rect x="2" y="4" width="12" height="3" fill="#0000b0"/><rect x="3" y="5" width="2" height="1" fill="#fff"/><path d="M6.500 7v8" fill="none" stroke="#000" stroke-width="1" /><path d="M1 15.700h14" fill="none" stroke="#000" stroke-width="1" /></g></svg>
<svg style="left:265px;top:54px" width="16" height="16" viewBox="0 0 16 16" shape-rendering="crispEdges"><g transform="translate(0,0)"><rect x="1.500" y="3.500" width="13" height="12" fill="#fff" stroke="#000"/><rect x="2" y="4" width="12" height="3" fill="#0000b0"/><rect x="3" y="5" width="2" height="1" fill="#fff"/><path d="M2 12.500h12" fill="none" stroke="#000" stroke-width="1" /><path d="M1 15.700h14" fill="none" stroke="#000" stroke-width="1" /></g></svg>
<svg style="left:287px;top:54px" width="16" height="16" viewBox="0 0 16 16" shape-rendering="crispEdges"><g transform="translate(0,-1)"><rect x="1.500" y="3.500" width="13" height="12" fill="#fff" stroke="#000"/><rect x="2" y="4" width="12" height="3" fill="#0000b0"/><rect x="3" y="5" width="2" height="1" fill="#fff"/><path d="M5.500 7v8M5.500 12.500h9M2 11.500h3M10.500 12.500v3" fill="none" stroke="#000" stroke-width="1" /><path d="M1 15.700h14" fill="none" stroke="#000" stroke-width="1" /></g></svg>
<svg style="left:322px;top:54px" width="16" height="16" viewBox="0 0 16 16" shape-rendering="crispEdges"><path d="M1 3v11l6.500-5.500z" fill="#000" shape-rendering="geometricPrecision"/></svg>
<svg style="left:345px;top:54px" width="16" height="16" viewBox="0 0 16 16" shape-rendering="crispEdges"><rect x="0" y="4" width="8" height="9" fill="#a0a0a0"/></svg>
<svg style="left:364px;top:54px" width="16" height="16" viewBox="0 0 16 16" shape-rendering="crispEdges"><path d="M3.500 2.500h11v9h-11z" fill="none" stroke="#a0a0a0" stroke-width="1.4" /><path d="M6 5.500h2M10 5.500h2M7 8.500h4" fill="none" stroke="#a0a0a0" stroke-width="1" /><path d="M1 10l3.500 4.500 1.500-1M4.500 14.500l4 0" fill="none" stroke="#a0a0a0" stroke-width="1.5" shape-rendering="geometricPrecision"/><path d="M11 9l2.500 2.500-2.500 2.500" fill="none" stroke="#a0a0a0" stroke-width="1.4" shape-rendering="geometricPrecision"/></svg>
<svg style="left:387px;top:54px" width="16" height="16" viewBox="0 0 16 16" shape-rendering="crispEdges"><path d="M4.5 4q-2 0-2 1.800v1.700q0 1.500-1.500 1.500q1.500 0 1.500 1.500v1.700q0 1.800 2 1.800" fill="none" stroke="#a0a0a0" stroke-width="1.4" shape-rendering="geometricPrecision"/><path d="M7.5 4q2 0 2 1.800v1.700q0 1.500 1.500 1.500q-1.500 0-1.500 1.500v1.700q0 1.800-2 1.800" fill="none" stroke="#a0a0a0" stroke-width="1.4" shape-rendering="geometricPrecision"/><path d="M6 3.500v-1q0-1.500 2-1.500h3q2.500 0 2.500 2.500v4M11 5.500l2.500 2.500 2.500-2.500" fill="none" stroke="#a0a0a0" stroke-width="1.3" shape-rendering="geometricPrecision"/></svg>
<svg style="left:410px;top:54px" width="16" height="16" viewBox="0 0 16 16" shape-rendering="crispEdges"><path d="M4.5 4q-2 0-2 1.800v1.700q0 1.500-1.500 1.500q1.500 0 1.500 1.500v1.700q0 1.800 2 1.800" fill="none" stroke="#a0a0a0" stroke-width="1.4" shape-rendering="geometricPrecision"/><path d="M7.5 4q2 0 2 1.800v1.700q0 1.500 1.500 1.500q-1.500 0-1.500 1.500v1.700q0 1.800-2 1.800" fill="none" stroke="#a0a0a0" stroke-width="1.4" shape-rendering="geometricPrecision"/><path d="M1 1.500h4q2 0 2 2v5M4.500 6.500l2.500 2.500 2.500-2.500" fill="none" stroke="#a0a0a0" stroke-width="1.3" shape-rendering="geometricPrecision"/></svg>
<svg style="left:432px;top:54px" width="16" height="16" viewBox="0 0 16 16" shape-rendering="crispEdges"><path d="M4.5 4q-2 0-2 1.800v1.700q0 1.500-1.500 1.500q1.500 0 1.500 1.500v1.700q0 1.800 2 1.800" fill="none" stroke="#a0a0a0" stroke-width="1.4" shape-rendering="geometricPrecision"/><path d="M7.5 4q2 0 2 1.800v1.700q0 1.500 1.500 1.500q-1.500 0-1.500 1.500v1.700q0 1.800-2 1.800" fill="none" stroke="#a0a0a0" stroke-width="1.4" shape-rendering="geometricPrecision"/><path d="M6.500 9v-6q0-2 2-2h2.500q3 0 3 2.500v4M11.500 5.500l2.500 2.500 2.500-2.500" fill="none" stroke="#a0a0a0" stroke-width="1.3" shape-rendering="geometricPrecision"/></svg>
<svg style="left:456px;top:54px" width="16" height="16" viewBox="0 0 16 16" shape-rendering="crispEdges"><path d="M8.5 4q-2 0-2 1.800v1.700q0 1.500-1.500 1.500q1.500 0 1.500 1.500v1.700q0 1.800 2 1.800" fill="none" stroke="#000" stroke-width="1.8" shape-rendering="geometricPrecision"/><path d="M11.5 4q2 0 2 1.800v1.700q0 1.500 1.500 1.500q-1.500 0-1.500 1.500v1.700q0 1.800-2 1.800" fill="none" stroke="#000" stroke-width="1.8" shape-rendering="geometricPrecision"/><path d="M0 6.500h5M3 4l2.500 2.500-2.500 2.500" fill="none" stroke="#000080" stroke-width="1.5" shape-rendering="geometricPrecision"/></svg>
<svg style="left:479px;top:54px" width="16" height="16" viewBox="0 0 16 16" shape-rendering="crispEdges"><path d="M4.500 9V4.500q0-1 1-1t1 1V3q0-1 1-1t1 1v1q0-1 1-1t1 1v1.500q0-1 1-1t1 1V11q0 3.500-3 4h-3q-2 0-3-2l-2.200-3.200q-.6-1 .4-1.600t2 1z" fill="#fff" stroke="#000" stroke-width="1.3" shape-rendering="geometricPrecision"/><path d="M6.500 4.500v4M8.500 4v4.500M10.500 5v3.500" fill="none" stroke="#000" stroke-width="1" shape-rendering="geometricPrecision"/></svg>
<svg style="left:510px;top:54px" width="16" height="16" viewBox="0 0 16 16" shape-rendering="crispEdges"><path d="M6 9h4v6h-4zM12 9h4v6h-4zM7 6h3v3h-3zM12 6h3v3h-3zM10 8h2v4h-2z" fill="#000"/><path d="M8 12h1v2h-1zM14 12h1v2h-1z" fill="#fff"/><path d="M2 2.500h3M1.500 4.500h2M3 7.500h3" fill="none" stroke="#d8d800" stroke-width="1.6" /></svg>
<svg style="left:11px;top:77px" width="16" height="16" viewBox="0 0 16 16" shape-rendering="crispEdges"><path d="M.5 2.500h12v12h-12zM2.500 4.500h8v2h-8zM2.500 8.500h3v4h-3zM7.500 8.500h3v4h-3z" fill="none" stroke="#fff" stroke-width="1.2" transform="translate(1,1)"/><path d="M.5 2.500h12v12h-12zM2.500 4.500h8v2h-8zM2.500 8.500h3v4h-3zM7.500 8.500h3v4h-3z" fill="none" stroke="#9a9a9a" stroke-width="1.2" /></svg>
<svg style="left:41px;top:77px" width="16" height="16" viewBox="0 0 16 16" shape-rendering="crispEdges"><path d="M.5 .5v15M3.500 2.500h5v3h-5zM3.500 9.500h3v3h-3zM15 4h-5M10 4l2-2M10 4l2 2M14 11h-5M9 11l2-2M9 11l2 2" fill="none" stroke="#fff" stroke-width="1.2" transform="translate(1,1)"/><path d="M.5 .5v15M3.500 2.500h5v3h-5zM3.500 9.500h3v3h-3zM15 4h-5M10 4l2-2M10 4l2 2M14 11h-5M9 11l2-2M9 11l2 2" fill="none" stroke="#9a9a9a" stroke-width="1.2" /></svg>
<svg style="left:64px;top:77px" width="16" height="16" viewBox="0 0 16 16" shape-rendering="crispEdges"><path d="M14.500 .5v15M7.500 2.500h5v3h-5zM9.500 9.500h3v3h-3zM1 4h5M6 4l-2-2M6 4l-2 2M2 11h5M7 11l-2-2M7 11l-2 2" fill="none" stroke="#fff" stroke-width="1.2" transform="translate(1,1)"/><path d="M14.500 .5v15M7.500 2.500h5v3h-5zM9.500 9.500h3v3h-3zM1 4h5M6 4l-2-2M6 4l-2 2M2 11h5M7 11l-2-2M7 11l-2 2" fill="none" stroke="#9a9a9a" stroke-width="1.2" /></svg>
<svg style="left:87px;top:77px" width="16" height="16" viewBox="0 0 16 16" shape-rendering="crispEdges"><path d="M0 .5h15M2.500 2.500h3v3h-3zM8.500 2.500h5v3h-5zM4 8v5M4 8l-2 2M4 8l2 2M11 8v5M11 8l-2 2M11 8l2 2" fill="none" stroke="#fff" stroke-width="1.2" transform="translate(1,1)"/><path d="M0 .5h15M2.500 2.500h3v3h-3zM8.500 2.500h5v3h-5zM4 8v5M4 8l-2 2M4 8l2 2M11 8v5M11 8l-2 2M11 8l2 2" fill="none" stroke="#9a9a9a" stroke-width="1.2" /></svg>
<svg style="left:110px;top:77px" width="16" height="16" viewBox="0 0 16 16" shape-rendering="crispEdges"><path d="M0 14.500h15M2.500 9.500h3v3h-3zM8.500 9.500h5v3h-5zM4 7v-5M4 7l-2-2M4 7l2-2M11 7v-5M11 7l-2-2M11 7l2-2" fill="none" stroke="#fff" stroke-width="1.2" transform="translate(1,1)"/><path d="M0 14.500h15M2.500 9.500h3v3h-3zM8.500 9.500h5v3h-5zM4 7v-5M4 7l-2-2M4 7l2-2M11 7v-5M11 7l-2-2M11 7l2-2" fill="none" stroke="#9a9a9a" stroke-width="1.2" /></svg>
<svg style="left:141px;top:77px" width="16" height="16" viewBox="0 0 16 16" shape-rendering="crispEdges"><path d="M.5 2.500h14v12h-14zM6.500 4.500h3v8h-3zM1 8.500h4M5 8.500l-2-2M5 8.500l-2 2M14 8.500h-4M10 8.500l2-2M10 8.500l2 2" fill="none" stroke="#fff" stroke-width="1.2" transform="translate(1,1)"/><path d="M.5 2.500h14v12h-14zM6.500 4.500h3v8h-3zM1 8.500h4M5 8.500l-2-2M5 8.500l-2 2M14 8.500h-4M10 8.500l2-2M10 8.500l2 2" fill="none" stroke="#9a9a9a" stroke-width="1.2" /></svg>
<svg style="left:164px;top:77px" width="16" height="16" viewBox="0 0 16 16" shape-rendering="crispEdges"><path d="M.5 2.500h14v12h-14zM3.500 7.500h8v3h-8zM7.500 3v4M7.500 7l-2-2M7.500 7l2-2M7.500 14v-3M7.500 11l-2 2M7.500 11l2 2" fill="none" stroke="#fff" stroke-width="1.2" transform="translate(1,1)"/><path d="M.5 2.500h14v12h-14zM3.500 7.500h8v3h-8zM7.500 3v4M7.500 7l-2-2M7.500 7l2-2M7.500 14v-3M7.500 11l-2 2M7.500 11l2 2" fill="none" stroke="#9a9a9a" stroke-width="1.2" /></svg>
<svg style="left:188px;top:77px" width="16" height="16" viewBox="0 0 16 16" shape-rendering="crispEdges"><path d="M3.500 6.500h7v3h-7zM.5 11.500h13v3h-13zM1 4.500h4M5 4.500l-2-2M5 4.500l-2 2M13 4.500h-4M9 4.500l2-2M9 4.500l2 2" fill="none" stroke="#fff" stroke-width="1.2" transform="translate(1,1)"/><path d="M3.500 6.500h7v3h-7zM.5 11.500h13v3h-13zM1 4.500h4M5 4.500l-2-2M5 4.500l-2 2M13 4.500h-4M9 4.500l2-2M9 4.500l2 2" fill="none" stroke="#9a9a9a" stroke-width="1.2" /></svg>
<svg style="left:210px;top:77px" width="16" height="16" viewBox="0 0 16 16" shape-rendering="crispEdges"><path d="M.5 4.500h3v8h-3zM6.500 1.500h3v14h-3zM12.500 2v4M12.500 6l-2-2M12.500 6l2-2M12.500 15v-4M12.500 11l-2 2M12.500 11l2 2M11 8.500h4" fill="none" stroke="#fff" stroke-width="1.2" transform="translate(1,1)"/><path d="M.5 4.500h3v8h-3zM6.500 1.500h3v14h-3zM12.500 2v4M12.500 6l-2-2M12.500 6l2-2M12.500 15v-4M12.500 11l-2 2M12.500 11l2 2M11 8.500h4" fill="none" stroke="#9a9a9a" stroke-width="1.2" /></svg>
<svg style="left:234px;top:77px" width="16" height="16" viewBox="0 0 16 16" shape-rendering="crispEdges"><path d="M3 2.500h-2.500v12h2.500M12 2.500h2.500v12h-2.500M3 8.500h9M3 8.500l2-2M3 8.500l2 2M12 8.500l-2-2M12 8.500l-2 2M7.500 6v5" fill="none" stroke="#fff" stroke-width="1.2" transform="translate(1,1)"/><path d="M3 2.500h-2.500v12h2.500M12 2.500h2.500v12h-2.500M3 8.500h9M3 8.500l2-2M3 8.500l2 2M12 8.500l-2-2M12 8.500l-2 2M7.500 6v5" fill="none" stroke="#9a9a9a" stroke-width="1.2" /></svg>
<svg style="left:257px;top:77px" width="16" height="16" viewBox="0 0 16 16" shape-rendering="crispEdges"><path d="M1.500 3v-2.500h12v2.500M1.500 13v2.500h12v-2.500M7.500 3v10M7.500 3l-2 2M7.500 3l2 2M7.500 13l-2-2M7.500 13l2-2M5 8.500h5" fill="none" stroke="#fff" stroke-width="1.2" transform="translate(1,1)"/><path d="M1.500 3v-2.500h12v2.500M1.500 13v2.500h12v-2.500M7.500 3v10M7.500 3l-2 2M7.500 3l2 2M7.500 13l-2-2M7.500 13l2-2M5 8.500h5" fill="none" stroke="#9a9a9a" stroke-width="1.2" /></svg>
<svg style="left:288px;top:77px" width="16" height="16" viewBox="0 0 16 16" shape-rendering="crispEdges"><path d="M.5 4.500h14v8h-14zM3 8.500h9M3 8.500l2-2M3 8.500l2 2M12 8.500l-2-2M12 8.500l-2 2" fill="none" stroke="#fff" stroke-width="1.2" transform="translate(1,1)"/><path d="M.5 4.500h14v8h-14zM3 8.500h9M3 8.500l2-2M3 8.500l2 2M12 8.500l-2-2M12 8.500l-2 2" fill="none" stroke="#9a9a9a" stroke-width="1.2" /></svg>
<svg style="left:314px;top:77px" width="16" height="16" viewBox="0 0 16 16" shape-rendering="crispEdges"><path d="M1.500 1.500h8v14h-8zM5.500 4v9M5.500 4l-2 2M5.500 4l2 2M5.500 13l-2-2M5.500 13l2-2" fill="none" stroke="#fff" stroke-width="1.2" transform="translate(1,1)"/><path d="M1.500 1.500h8v14h-8zM5.500 4v9M5.500 4l-2 2M5.500 4l2 2M5.500 13l-2-2M5.500 13l2-2" fill="none" stroke="#9a9a9a" stroke-width="1.2" /></svg>
<svg style="left:334px;top:77px" width="16" height="16" viewBox="0 0 16 16" shape-rendering="crispEdges"><path d="M.5 2.500h14v12h-14zM3 8.500h9M3 8.500l2-2M3 8.500l2 2M12 8.500l-2-2M12 8.500l-2 2M7.500 5v7M7.500 5l-2 2M7.500 5l2 2M7.500 12l-2-2M7.500 12l2-2" fill="none" stroke="#fff" stroke-width="1.2" transform="translate(1,1)"/><path d="M.5 2.500h14v12h-14zM3 8.500h9M3 8.500l2-2M3 8.500l2 2M12 8.500l-2-2M12 8.500l-2 2M7.500 5v7M7.500 5l-2 2M7.500 5l2 2M7.500 12l-2-2M7.500 12l2-2" fill="none" stroke="#9a9a9a" stroke-width="1.2" /></svg>
<svg style="left:10px;top:27px" width="16" height="16" viewBox="0 0 16 16"><rect x=".5" y=".5" width="15" height="15" rx="2" fill="#0a0ac8" stroke="#0808a0"/><rect x="2" y="1.900" width="12.200" height="3.400" rx=".8" fill="none" stroke="#fff" stroke-width="1.500"/><path d="M5.500 7.600H14v6.500M8.500 7.800L2 12.500M11.700 8L4.200 14.200M14 9.800L8.500 14.500" fill="none" stroke="#fff" stroke-width="1.300"/></svg>
<svg style="left:2px;top:2px" width="16" height="16" viewBox="0 0 16 16"><rect x=".5" y=".5" width="15" height="15" rx="2" fill="#dc1a0c" stroke="#b01006"/><rect x="2" y="1.900" width="12.200" height="3.400" rx=".8" fill="none" stroke="#fff" stroke-width="1.500"/><path d="M5.500 7.600H14v6.500M8.500 7.800L2 12.500M11.700 8L4.200 14.200M14 9.800L8.500 14.500" fill="none" stroke="#fff" stroke-width="1.300"/></svg>
<div class="a " style="left:1821px;top:2px;width:31px;height:17px;border:1px solid #4b6489;border-radius:3px;background:linear-gradient(#c4d6ec 0,#b4c9e4 45%,#9db7d8 50%,#b9cfe8 100%);box-shadow:inset 0 0 0 1px rgba(255,255,255,.5)"></div>
<div class="a " style="left:1854px;top:2px;width:31px;height:17px;border:1px solid #4b6489;border-radius:3px;background:linear-gradient(#c4d6ec 0,#b4c9e4 45%,#9db7d8 50%,#b9cfe8 100%);box-shadow:inset 0 0 0 1px rgba(255,255,255,.5)"></div>
<div class="a " style="left:1887px;top:2px;width:31px;height:17px;border:1px solid #5a1a10;border-radius:3px;background:linear-gradient(#eba294 0,#dd7e6c 45%,#c9432b 50%,#d8603c 100%);box-shadow:inset 0 0 0 1px rgba(255,255,255,.35)"></div>
<div class="a " style="left:1831px;top:10px;width:11px;height:4px;background:#fff;border:1px solid #444;border-radius:1px"></div>
<div class="a " style="left:1868px;top:5px;width:9px;height:8px;background:#fff;border:1px solid #444;box-shadow:inset 0 0 0 2px #fff,inset 0 0 0 3px #444"></div>
<div class="a " style="left:1864px;top:8px;width:9px;height:8px;background:#fff;border:1px solid #444;box-shadow:inset 0 0 0 2px #fff,inset 0 0 0 3px #444"></div>
<svg style="left:1896px;top:5px" width="12" height="10"><path d="M1.500 1l9 8M10.500 1l-9 8" stroke="#444" stroke-width="4"/><path d="M1.500 1l9 8M10.500 1l-9 8" stroke="#fff" stroke-width="2.200"/></svg>
<div class="a " style="left:1870px;top:32px;width:16px;height:14px;background:#f0f0f0;border:1px solid;border-color:#fff #696969 #696969 #fff;box-shadow:inset -1px -1px 0 #a0a0a0"></div>
<div class="a " style="left:1886px;top:32px;width:16px;height:14px;background:#f0f0f0;border:1px solid;border-color:#fff #696969 #696969 #fff;box-shadow:inset -1px -1px 0 #a0a0a0"></div>
<div class="a " style="left:1904px;top:32px;width:16px;height:14px;background:#f0f0f0;border:1px solid;border-color:#fff #696969 #696969 #fff;box-shadow:inset -1px -1px 0 #a0a0a0"></div>
<div class="a " style="left:1874px;top:41px;width:6px;height:2px;background:#000"></div>
<div class="a " style="left:1891px;top:35px;width:6px;height:6px;border:1px solid #000;border-top-width:2px"></div>
<div class="a " style="left:1889px;top:38px;width:6px;height:6px;border:1px solid #000;border-top-width:2px;background:#f0f0f0"></div>
<svg style="left:1908px;top:35px" width="8" height="7"><path d="M.5 0l7 7M7.500 0l-7 7" stroke="#000" stroke-width="1.800"/></svg>
<div class="a " style="left:0px;top:839px;width:1920px;height:181px;background:#f0f0f0"></div>
<svg style="left:6px;top:846px" width="6" height="5"><path d="M.3 0l5.400 5M5.700 0l-5.400 5" stroke="#000" stroke-width="1.700"/></svg>
<div class="a " style="left:3px;top:854px;width:12px;height:1px;background:#a0a0a0"></div>
<div class="a " style="left:14px;top:843px;width:1px;height:11px;background:#a0a0a0"></div>
<div class="a " style="left:6px;top:859px;width:7px;height:6px;border:1px solid #000;border-top-width:2px"></div>
<div class="a " style="left:3px;top:867px;width:12px;height:1px;background:#a0a0a0"></div>
<div class="a " style="left:14px;top:856px;width:1px;height:11px;background:#a0a0a0"></div>
<div class="a " style="left:8px;top:872px;width:2px;height:142px;border-left:1px solid #fff;border-right:1px solid #a0a0a0"></div>
<div class="a " style="left:22px;top:845px;width:55px;height:21px;background:#f4f4f4"></div>
<div class="a " style="left:78px;top:843px;width:59px;height:23px;background:#f4f4f4;border-right:2px solid #808080"></div>
<div class="a " style="left:204px;top:845px;width:2px;height:20px;border-left:1px solid #fff;border-right:1px solid #808080;width:3px;background:#a0a0a0"></div>
<div class="a " style="left:273px;top:845px;width:2px;height:20px;border-left:1px solid #fff;border-right:1px solid #808080;width:3px;background:#a0a0a0"></div>
<div class="a " style="left:343px;top:845px;width:2px;height:20px;border-left:1px solid #fff;border-right:1px solid #808080;width:3px;background:#a0a0a0"></div>
<div class="a " style="left:407px;top:845px;width:2px;height:20px;border-left:1px solid #fff;border-right:1px solid #808080;width:3px;background:#a0a0a0"></div>
<div class="a " style="left:472px;top:845px;width:2px;height:20px;border-left:1px solid #fff;border-right:1px solid #808080;width:3px;background:#a0a0a0"></div>
<div class="a " style="left:554px;top:845px;width:2px;height:20px;border-left:1px solid #fff;border-right:1px solid #808080;width:3px;background:#a0a0a0"></div>
<svg style="left:29px;top:847px" width="12" height="16" viewBox="0 0 12 16"><path d="M2.500 5q0-3.500 3.500-3.500t3.500 3q0 2-2 3t-1.500 2.500" fill="none" stroke="#000" stroke-width="3.400"/><path d="M2.500 5q0-3.500 3.500-3.500t3.500 3q0 2-2 3t-1.500 2.500" fill="none" stroke="#e8e000" stroke-width="1.800"/><circle cx="6" cy="13" r="1.700" fill="#e8e000" stroke="#000"/></svg>
<div class="a s" style="left:48px;top:849px;color:#000;">提示</div>
<svg style="left:86px;top:845px" width="12" height="13" viewBox="0 0 12 13"><rect x=".8" y=".8" width="10.500" height="11" fill="#fff" stroke="#000" stroke-width="1.400"/><rect x="1" y="1" width="10" height="2.200" fill="#000080"/><path d="M3 5.500h5M3 7.500h4M3 9.500h5" stroke="#000"/></svg>
<div class="a s" style="left:106px;top:847px;color:#000;">输出</div>
<svg style="left:144px;top:847px" width="12" height="14" viewBox="0 0 12 14"><path d="M1.500 0v13M4.500 0v13M7.500 0v13M10.500 0v13" stroke="#000" stroke-width="1.300" stroke-dasharray="2 1.500"/><path d="M0 4.500h12M0 9.500h12" stroke="#000" stroke-width="1"/></svg>
<div class="a s" style="left:164px;top:849px;color:#000;">调用表</div>
<svg style="left:212px;top:846px" width="16" height="16" viewBox="0 0 16 16"><circle cx="6" cy="6" r="5" fill="#fff" stroke="#000" stroke-width="1.400"/><path d="M10 10l5 5" stroke="#000" stroke-width="2.200"/></svg>
<div class="a s" style="left:234px;top:849px;color:#000;">监视表</div>
<svg style="left:282px;top:847px" width="16" height="14" viewBox="0 0 16 14"><path d="M.5 5.500l4-4.500 4 4.500-4 4.500zM7.500 5.500l4-4.500 4 4.500-4 4.500z" fill="#fff" stroke="#000"/><path d="M.5 5.500l4-4.500 4 4.500-4 4.500z" fill="#e8e800" stroke="#000"/><path d="M.5 5.500v2.500l4 4.500v-2.500zM7.500 5.500v2.500l4 4.500v-2.500z" fill="#808040" stroke="#000" stroke-width=".8"/><path d="M8.500 5.500l-4 4.500v2.500l4-4.500zM15.500 5.500l-4 4.500v2.500l4-4.500z" fill="#c0c0c0" stroke="#000" stroke-width=".8"/></svg>
<div class="a s" style="left:304px;top:849px;color:#000;">变量表</div>
<svg style="left:352px;top:846px" width="16" height="16" viewBox="0 0 16 16" shape-rendering="crispEdges"><path d="M1.500 2.500h9v11h-9z" fill="#fff" stroke="#000" stroke-width="1" /><path d="M1 2.500v11.500" fill="none" stroke="#000" stroke-width="1" /><path d="M1 13.800h10M1 2.200h10" fill="none" stroke="#000" stroke-width="1" /><path d="M3 5.500h3M3 7.500h2M3 9.500h2M3 11.500h3" fill="none" stroke="#000" stroke-width="1" /><circle cx="9" cy="8" r="2.800" fill="#fff" stroke="#000" shape-rendering="geometricPrecision"/><path d="M8 7.500h.8M10 7.500h.8M8.500 9.300h1.500" fill="none" stroke="#000" stroke-width="1" /><path d="M11 10.500l4 4" fill="none" stroke="#000" stroke-width="2" shape-rendering="geometricPrecision"/></svg>
<div class="a s" style="left:374px;top:849px;color:#000;">搜寻<i>1</i></div>
<svg style="left:416px;top:846px" width="16" height="16" viewBox="0 0 16 16" shape-rendering="crispEdges"><path d="M1.500 2.500h9v11h-9z" fill="#fff" stroke="#000" stroke-width="1" /><path d="M1 2.500v11.500" fill="none" stroke="#000" stroke-width="1" /><path d="M1 13.800h10M1 2.200h10" fill="none" stroke="#000" stroke-width="1" /><path d="M3 5.500h3M3 7.500h2M3 9.500h2M3 11.500h3" fill="none" stroke="#000" stroke-width="1" /><circle cx="9" cy="8" r="2.800" fill="#fff" stroke="#000" shape-rendering="geometricPrecision"/><path d="M8 7.500h.8M10 7.500h.8M8.500 9.300h1.500" fill="none" stroke="#000" stroke-width="1" /><path d="M11 10.500l4 4" fill="none" stroke="#000" stroke-width="2" shape-rendering="geometricPrecision"/></svg>
<div class="a s" style="left:438px;top:849px;color:#000;">搜寻<i>2</i></div>
<svg style="left:482px;top:848px" width="12" height="14" viewBox="0 0 12 14"><rect x=".8" y=".8" width="10.500" height="12.500" rx="1" fill="#fff" stroke="#000" stroke-width="1.400"/><path d="M3 4h6M3 6.500h4M3 9h6M3 11h3" stroke="#000"/></svg>
<div class="a s" style="left:502px;top:849px;color:#000;">剪辑历史</div>
<div class="a " style="left:18px;top:863px;width:1898px;height:152px;background:#fafafa;border-right:1px solid #696969;border-bottom:1px solid #696969"></div>
<div class="a " style="left:22px;top:868px;width:1871px;height:140px;border-top:1px solid #696969;border-left:1px solid #696969;background:#333"></div>
<div class="a " style="left:1893px;top:868px;width:18px;height:140px;background:#f0f0f0"></div>
<svg style="left:1898px;top:877px" width="8" height="4"><polygon points="0,4 8,4 4,0" fill="#a0a0a0"/></svg>
<svg style="left:1898px;top:997px" width="8" height="4"><polygon points="0,0 8,0 4,4" fill="#a0a0a0"/></svg>
<div class="a s" style="left:25px;top:872px;color:#fff;">◆</div>
<div class="a s" style="left:37px;top:872px;color:#fff;"><i>.</i>易语言助手提醒您：<i>.</i>易语言助手加载完毕！<i> </i>，智能编译开启成功<i>!  </i>当前易版本：<i>5.6  </i>当前系统：<i>Windows 7 x64</i></div>
<div class="a s" style="left:25px;top:896px;color:#fff;">◆</div>
<div class="a s" style="left:37px;top:896px;color:#fff;"><i>.</i>易语言助手提醒您：插件加载完毕！</div>
<div class="a " style="left:0px;top:1019px;width:1920px;height:21px;background:#f0f0f0;border-top:1px solid #a0a0a0;box-shadow:inset 0 1px 0 #fff"></div>
<div class="a st" style="left:6px;top:1024px;color:#000;font-size:12px;line-height:16px;white-space:pre">调用格式：</div>
<div class="a st" style="left:75px;top:1024px;color:#000;font-size:12px;line-height:16px;white-space:pre">〈无返回值〉</div>
<div class="a st" style="left:146px;top:1024px;color:#000;font-size:12px;line-height:16px;white-space:pre">赋值</div>
<div class="a st" style="left:174px;top:1024px;color:#000;font-size:12px;line-height:16px;white-space:pre">（</div>
<div class="a st" style="left:186px;top:1024px;color:#000;font-size:12px;line-height:16px;white-space:pre">通用型变量/变量数组</div>
<div class="a st" style="left:303px;top:1024px;color:#000;font-size:12px;line-height:16px;white-space:pre">被赋值的变量或变量数组</div>
<div class="a st" style="left:435px;top:1024px;color:#000;font-size:12px;line-height:16px;white-space:pre">，</div>
<div class="a st" style="left:447px;top:1024px;color:#000;font-size:12px;line-height:16px;white-space:pre">通用型数组/非数组</div>
<div class="a st" style="left:552px;top:1024px;color:#000;font-size:12px;line-height:16px;white-space:pre">用作赋于的值或资源</div>
<div class="a st" style="left:661px;top:1024px;color:#000;font-size:12px;line-height:16px;white-space:pre">）</div>
<div class="a st" style="left:677px;top:1024px;color:#000;font-size:12px;line-height:16px;white-space:pre">-</div>
<div class="a st" style="left:685px;top:1024px;color:#000;font-size:12px;line-height:16px;white-space:pre">系统核心支持库-&gt;变量操作</div>
<div class="a st" style="left:841px;top:1024px;color:#000;font-size:12px;line-height:16px;white-space:pre">|</div>
<div class="a st" style="left:855px;top:1024px;color:#000;font-size:12px;line-height:16px;white-space:pre">英文名称：set</div>
<div class="a st" style="left:942px;top:1024px;color:#000;font-size:12px;line-height:16px;white-space:pre">|</div>
<div class="a st" style="left:956px;top:1024px;color:#000;font-size:12px;line-height:16px;white-space:pre">将指定的常数、常数集、常量、资源、对象或者变量赋于到指定的变量或变量</div>
<div class="a " style="left:1766px;top:1022px;width:17px;height:17px;background:#f0f0f0;border:1px solid;border-color:#fff #000 #000 #fff;box-shadow:inset -1px -1px 0 #808080"></div>
<svg style="left:1770px;top:1028px" width="8" height="4"><polygon points="0,4 8,4 4,0" fill="#000"/></svg>
<div class="a " style="left:1786px;top:1022px;width:61px;height:17px;border:1px solid;border-color:#a0a0a0 #fff #fff #a0a0a0"></div>
<div class="a " style="left:1850px;top:1022px;width:37px;height:17px;border:1px solid;border-color:#a0a0a0 #fff #fff #a0a0a0"></div>
<div class="a " style="left:1890px;top:1022px;width:30px;height:17px;border:1px solid;border-color:#a0a0a0 #fff #fff #a0a0a0"></div>
<div class="a st" style="left:1789px;top:1024px;color:#000;font-size:12px;line-height:16px;white-space:pre">行 : 24</div>
<div class="a st" style="left:1853px;top:1024px;color:#000;font-size:12px;line-height:16px;white-space:pre">列 : 1</div>
<div class="a st" style="left:1892px;top:1024px;color:#000;font-size:12px;line-height:16px;white-space:pre">未改</div>
<div class="a " style="left:0px;top:1040px;width:1920px;height:8px;background:linear-gradient(#3a4a62 0,#3a4a62 1px,#8da3c1 1px,#8198b7 100%)"></div>
<div class="a " style="left:60px;top:1041px;width:90px;height:8px;background:linear-gradient(90deg,#dde5f0,#b9c6da 45%,#a3b4cc);border:1px solid #50627e;border-bottom:0;border-radius:2px 2px 0 0;box-shadow:inset 0 1px 0 #f4f7fb"></div>
<div class="a " style="left:153px;top:1041px;width:90px;height:8px;background:linear-gradient(90deg,#dde5f0,#b9c6da 45%,#a3b4cc);border:1px solid #50627e;border-bottom:0;border-radius:2px 2px 0 0;box-shadow:inset 0 1px 0 #f4f7fb"></div>
<div class="a " style="left:245px;top:1041px;width:88px;height:8px;background:linear-gradient(90deg,#dde5f0,#b9c6da 45%,#a3b4cc);border:1px solid #50627e;border-bottom:0;border-radius:2px 2px 0 0;box-shadow:inset 0 1px 0 #f4f7fb"></div>
<div class="a " style="left:336px;top:1041px;width:89px;height:8px;background:linear-gradient(90deg,#dde5f0,#b9c6da 45%,#a3b4cc);border:1px solid #50627e;border-bottom:0;border-radius:2px 2px 0 0;box-shadow:inset 0 1px 0 #f4f7fb"></div>
<div class="a " style="left:428px;top:1041px;width:89px;height:8px;background:linear-gradient(90deg,#dde5f0,#b9c6da 45%,#a3b4cc);border:1px solid #50627e;border-bottom:0;border-radius:2px 2px 0 0;box-shadow:inset 0 1px 0 #f4f7fb"></div>
<div class="a " style="left:519px;top:1041px;width:88px;height:8px;background:linear-gradient(90deg,#dde5f0,#b9c6da 45%,#a3b4cc);border:1px solid #50627e;border-bottom:0;border-radius:2px 2px 0 0;box-shadow:inset 0 1px 0 #f4f7fb"></div>
<div class="a " style="left:609px;top:1041px;width:57px;height:8px;background:linear-gradient(90deg,#dde5f0,#b9c6da 45%,#a3b4cc);border:1px solid #50627e;border-bottom:0;border-radius:2px 2px 0 0;box-shadow:inset 0 1px 0 #f4f7fb"></div>
<div class="a " style="left:668px;top:1041px;width:89px;height:8px;background:linear-gradient(90deg,#dde5f0,#b9c6da 45%,#a3b4cc);border:1px solid #50627e;border-bottom:0;border-radius:2px 2px 0 0;box-shadow:inset 0 1px 0 #f4f7fb"></div>
<div class="a " style="left:760px;top:1041px;width:90px;height:8px;background:linear-gradient(90deg,#dde5f0,#b9c6da 45%,#a3b4cc);border:1px solid #50627e;border-bottom:0;border-radius:2px 2px 0 0;box-shadow:inset 0 1px 0 #f4f7fb"></div>
<div class="a " style="left:853px;top:1041px;width:89px;height:8px;background:linear-gradient(90deg,#dde5f0,#b9c6da 45%,#a3b4cc);border:1px solid #50627e;border-bottom:0;border-radius:2px 2px 0 0;box-shadow:inset 0 1px 0 #f4f7fb"></div>
<div class="a " style="left:945px;top:1041px;width:90px;height:8px;background:linear-gradient(90deg,#dde5f0,#b9c6da 45%,#a3b4cc);border:1px solid #50627e;border-bottom:0;border-radius:2px 2px 0 0;box-shadow:inset 0 1px 0 #f4f7fb"></div>
<div class="a " style="left:1036px;top:1041px;width:91px;height:8px;background:linear-gradient(90deg,#dde5f0,#b9c6da 45%,#a3b4cc);border:1px solid #50627e;border-bottom:0;border-radius:2px 2px 0 0;box-shadow:inset 0 1px 0 #f4f7fb"></div>
<div class="a " style="left:1130px;top:1041px;width:88px;height:8px;background:linear-gradient(90deg,#dde5f0,#b9c6da 45%,#a3b4cc);border:1px solid #50627e;border-bottom:0;border-radius:2px 2px 0 0;box-shadow:inset 0 1px 0 #f4f7fb"></div>
<div class="a " style="left:1222px;top:1041px;width:90px;height:8px;background:linear-gradient(90deg,#dde5f0,#b9c6da 45%,#a3b4cc);border:1px solid #50627e;border-bottom:0;border-radius:2px 2px 0 0;box-shadow:inset 0 1px 0 #f4f7fb"></div>
<div class="a " style="left:1315px;top:1041px;width:91px;height:8px;background:linear-gradient(90deg,#dde5f0,#b9c6da 45%,#a3b4cc);border:1px solid #50627e;border-bottom:0;border-radius:2px 2px 0 0;box-shadow:inset 0 1px 0 #f4f7fb"></div>
<div class="a " style="left:1409px;top:1041px;width:89px;height:8px;background:linear-gradient(90deg,#dde5f0,#b9c6da 45%,#a3b4cc);border:1px solid #50627e;border-bottom:0;border-radius:2px 2px 0 0;box-shadow:inset 0 1px 0 #f4f7fb"></div>
<div class="a " style="left:12px;top:1042px;width:30px;height:14px;border-radius:50%;background:#a9c4e4;border:1px solid #dfeaf6"></div>
<div class="a " style="left:252px;top:1044px;width:16px;height:4px;background:#e8d880;border-radius:3px 3px 0 0"></div>
<div class="a " style="left:344px;top:1044px;width:16px;height:4px;background:#e8d880;border-radius:3px 3px 0 0"></div>
<div class="a " style="left:436px;top:1044px;width:16px;height:4px;background:#e8d880;border-radius:3px 3px 0 0"></div>
<div class="a " style="left:527px;top:1044px;width:16px;height:4px;background:#e8d880;border-radius:3px 3px 0 0"></div>
<div class="a " style="left:640px;top:1044px;width:16px;height:4px;background:#3060d0;border-radius:3px 3px 0 0"></div>
<div class="a " style="left:683px;top:1044px;width:16px;height:4px;background:#e8f0e0;border-radius:3px 3px 0 0"></div>
<div class="a " style="left:868px;top:1044px;width:16px;height:4px;background:#e8e040;border-radius:3px 3px 0 0"></div>
<div class="a " style="left:958px;top:1044px;width:16px;height:4px;background:#503020;border-radius:3px 3px 0 0"></div>
<div class="a " style="left:1052px;top:1044px;width:16px;height:4px;background:#f4f4f4;border-radius:3px 3px 0 0"></div>
<div class="a " style="left:1324px;top:1043px;width:30px;height:5px;background:#18c838;border-radius:4px 4px 0 0"></div>
<div class="a " style="left:1906px;top:1041px;width:14px;height:7px;background:#6a7f9e;border-left:1px solid #c0cde0"></div>
</body></html>
